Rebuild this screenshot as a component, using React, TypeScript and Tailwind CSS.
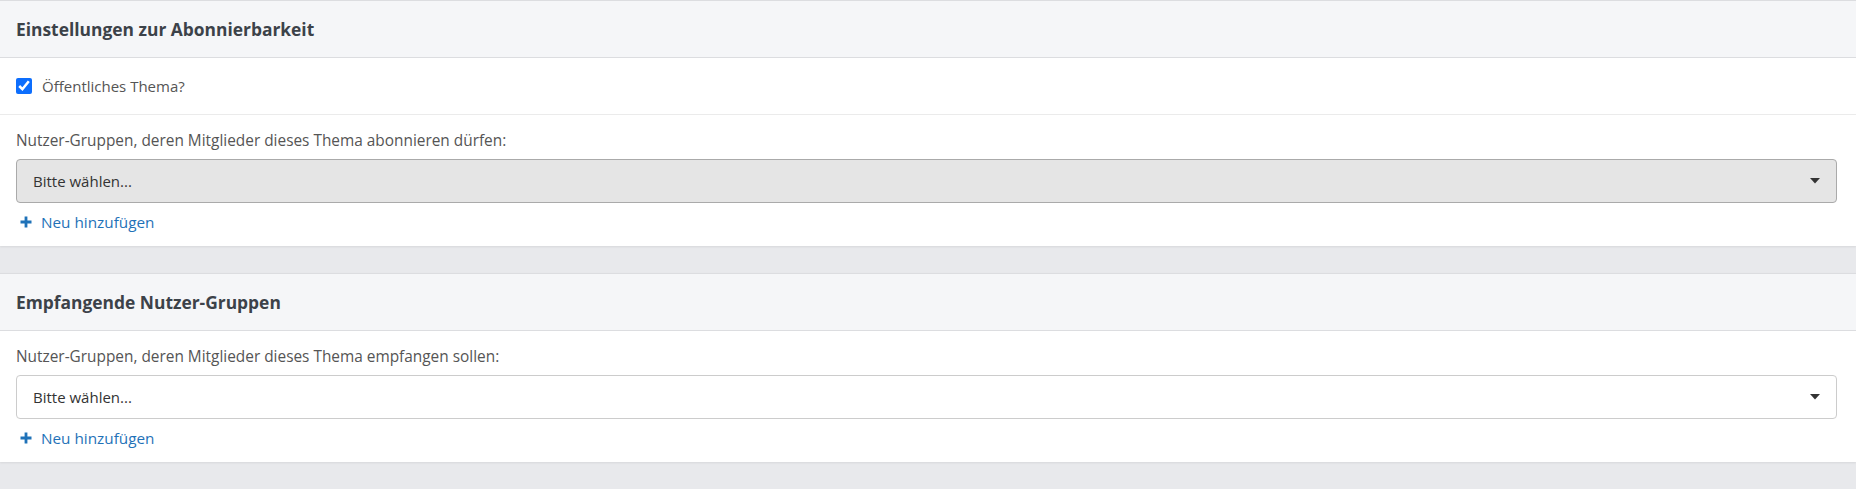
import React from "react";

const font = { fontFamily: '"Open Sans", "Noto Sans", sans-serif' };

function Caret() {
  return (
    <svg width="10" height="6" viewBox="0 0 10 6" className="shrink-0">
      <path d="M0 0 H10 L5 5.5 Z" fill="#333" />
    </svg>
  );
}

function PlusIcon() {
  return (
    <svg width="12" height="12" viewBox="0 0 12 12" className="shrink-0">
      <path d="M4.6 0.5 H7.4 V4.6 H11.5 V7.4 H7.4 V11.5 H4.6 V7.4 H0.5 V4.6 H4.6 Z" fill="#1f72b8" />
    </svg>
  );
}

function GroupSelect({ label, disabled }: { label: string; disabled?: boolean }) {
  return (
    <div className="pl-4 pr-[19px] pt-4 pb-[13px]">
      <div className="text-[15.4px] leading-[20px] text-[#555]">{label}</div>
      <div
        className={`mt-2 h-[44px] flex items-center justify-between pl-4 pr-[16px] rounded-[4px] border text-[15px] text-[#333] ${
          disabled ? "bg-[#e5e5e5] border-[#aaa]" : "bg-white border-[#ccc]"
        }`}
      >
        <span>Bitte wählen...</span>
        <Caret />
      </div>
      <button className="mt-2 flex items-center gap-[9px] pl-1 h-[22px] text-[15.3px] text-[#1f72b8]">
        <PlusIcon />
        <span>Neu hinzufügen</span>
      </button>
    </div>
  );
}

function Card({ title, children }: { title: string; children: React.ReactNode }) {
  return (
    <section className="bg-white border-t border-[#dcdde0] shadow-[0_1px_2px_rgba(0,0,0,0.08)]">
      <div className="h-[57px] flex items-center px-4 bg-[#f5f6f8] border-b border-[#dcdde0]">
        <h2 className="text-[17.4px] font-bold text-[#3c4249]">{title}</h2>
      </div>
      {children}
    </section>
  );
}

export default function App() {
  return (
    <div className="h-[489px] overflow-hidden bg-[#e8e9ec]" style={font}>
      <Card title="Einstellungen zur Abonnierbarkeit">
        <label className="h-[57px] flex items-center gap-[10px] px-4 border-b border-[#ebebeb] text-[15px] text-[#555]">
          <input type="checkbox" defaultChecked className="w-4 h-4 accent-[#0d6efd]" />
          <span>Öffentliches Thema?</span>
        </label>
        <GroupSelect label="Nutzer-Gruppen, deren Mitglieder dieses Thema abonnieren dürfen:" disabled />
      </Card>
      <div className="h-[27px]" />
      <Card title="Empfangende Nutzer-Gruppen">
        <GroupSelect label="Nutzer-Gruppen, deren Mitglieder dieses Thema empfangen sollen:" />
      </Card>
    </div>
  );
}
